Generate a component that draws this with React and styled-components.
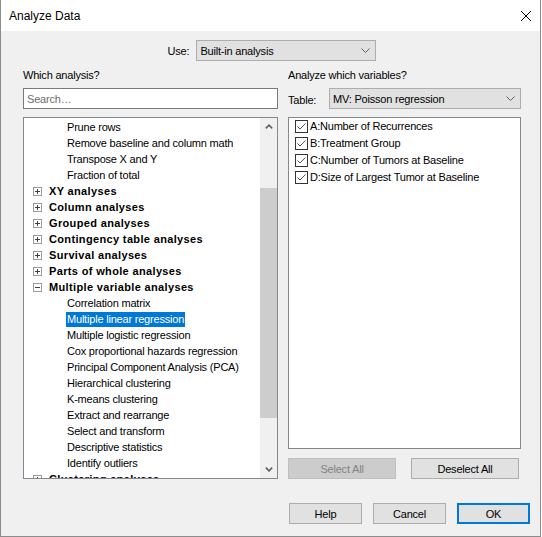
import React from 'react';
import styled, { createGlobalStyle } from 'styled-components';

const GlobalStyle = createGlobalStyle`
  html, body { margin: 0; padding: 0; background: #ffffff; }
  body {
    font-family: "Liberation Sans", Arial, sans-serif;
    font-size: 11px;
    letter-spacing: -0.2px;
    color: #000;
  }
  * { box-sizing: border-box; }
`;

const Window = styled.div`
  width: 541px;
  height: 537px;
  border: 1px solid #8c8c8c;
  border-top: none;
  background: #f0f0f0;
  display: flex;
  flex-direction: column;
`;

const TitleBar = styled.div`
  height: 31px;
  flex: none;
  background: #fff;
  display: flex;
  align-items: center;
  justify-content: space-between;
  padding: 0 9px 0 8px;
  font-size: 12px;
  letter-spacing: 0;
`;

const UseRow = styled.div`
  margin-top: 9px;
  height: 21px;
  display: flex;
  align-items: center;
  justify-content: center;
  gap: 7px;
  padding-left: 3px;
`;

const Columns = styled.div`
  display: flex;
  gap: 10px;
  padding-left: 22px;
  margin-top: 7px;
`;

const Column = styled.div`
  width: ${(p) => p.width}px;
  display: flex;
  flex-direction: column;
`;

const Label = styled.div`
  height: 14px;
  line-height: 14px;
`;

const Select = styled.div`
  height: 21px;
  width: ${(p) => (p.width ? `${p.width}px` : 'auto')};
  flex: ${(p) => (p.width ? 'none' : '1')};
  background: #e1e1e1;
  border: 1px solid #adadad;
  display: flex;
  align-items: center;
  justify-content: space-between;
  padding: 0 5px 0 3px;
`;

const SearchBox = styled.div`
  margin-top: 6px;
  height: 21px;
  border: 1px solid #7a7a7a;
  background: #fff;
  color: #6d6d6d;
  display: flex;
  align-items: center;
  padding-left: 3px;
`;

const TableRow = styled.div`
  margin-top: 6px;
  height: 21px;
  display: flex;
  align-items: center;
`;

const TableLabel = styled.div`
  width: 41px;
  padding-top: 3px;
`;

const ListBox = styled.div`
  margin-top: 8px;
  height: ${(p) => p.height}px;
  border: 1px solid #828790;
  background: #fff;
  display: flex;
  overflow: hidden;
`;

const TreeBody = styled.div`
  flex: 1;
  padding-top: 1px;
`;

const CategoryRow = styled.div`
  height: 16px;
  display: flex;
  align-items: center;
  padding-left: 9px;
  font-weight: bold;
  letter-spacing: 0.35px;
  white-space: nowrap;
  svg { margin-right: 7px; flex: none; }
`;

const ItemRow = styled.div`
  height: 16px;
  display: flex;
  align-items: flex-start;
  padding-left: 42px;
`;

const ItemText = styled.span`
  margin-top: 1px;
  height: 15px;
  line-height: 15px;
  padding: 0 1px;
  white-space: nowrap;
  background: ${(p) => (p.selected ? '#0078d7' : 'transparent')};
  color: ${(p) => (p.selected ? '#fff' : '#000')};
`;

const ScrollBar = styled.div`
  width: 17px;
  flex: none;
  background: #f0f0f0;
  display: flex;
  flex-direction: column;
`;

const ScrollArrow = styled.div`
  height: 17px;
  flex: none;
  display: flex;
  align-items: center;
  justify-content: center;
`;

const ScrollTrack = styled.div`
  flex: 1;
`;

const ScrollThumb = styled.div`
  margin-top: ${(p) => p.offset}px;
  height: ${(p) => p.size}px;
  background: #cdcdcd;
`;

const VarList = styled.div`
  flex: 1;
`;

const VarRow = styled.div`
  height: 17px;
  display: flex;
  align-items: flex-start;
  padding: 2px 0 0 6px;
  gap: 2px;
  line-height: 13px;
  svg { flex: none; }
`;

const ButtonRow = styled.div`
  margin-top: ${(p) => p.top}px;
  display: flex;
  justify-content: ${(p) => p.justify || 'flex-start'};
  gap: ${(p) => p.gap}px;
  padding-right: ${(p) => p.right || 0}px;
`;

const Button = styled.div`
  width: ${(p) => p.width}px;
  height: 21px;
  display: flex;
  align-items: center;
  justify-content: center;
  background: ${(p) => (p.disabled ? '#cccccc' : '#e1e1e1')};
  color: ${(p) => (p.disabled ? '#838383' : '#000')};
  border: ${(p) => (p.primary ? '2px solid #0078d7' : p.disabled ? '1px solid #bfbfbf' : '1px solid #adadad')};
`;

const Chevron = () => (
  <svg width="9" height="5" viewBox="0 0 9 5">
    <polyline points="0.5,0.5 4.5,4.5 8.5,0.5" fill="none" stroke="#606060" strokeWidth="1" />
  </svg>
);

const ArrowUp = () => (
  <svg width="8" height="5" viewBox="0 0 8 5">
    <polyline points="0.8,4.4 4,1.2 7.2,4.4" fill="none" stroke="#606060" strokeWidth="1.6" />
  </svg>
);

const ArrowDown = () => (
  <svg width="8" height="5" viewBox="0 0 8 5">
    <polyline points="0.8,0.6 4,3.8 7.2,0.6" fill="none" stroke="#606060" strokeWidth="1.6" />
  </svg>
);

const CloseIcon = () => (
  <svg width="10" height="10" viewBox="0 0 10 10">
    <path d="M0 0 L10 10 M10 0 L0 10" stroke="#000" strokeWidth="1" />
  </svg>
);

const Expander = ({ open }) => (
  <svg width="9" height="9" viewBox="0 0 9 9">
    <rect x="0.5" y="0.5" width="8" height="8" fill="#fff" stroke="#9b9b9b" />
    <line x1="2" y1="4.5" x2="7" y2="4.5" stroke="#404040" />
    {!open && <line x1="4.5" y1="2" x2="4.5" y2="7" stroke="#404040" />}
  </svg>
);

const CheckBox = () => (
  <svg width="13" height="13" viewBox="0 0 13 13">
    <rect x="0.5" y="0.5" width="12" height="12" fill="#fff" stroke="#333" />
    <polyline points="2.5,6.5 5,9 10.5,3.5" fill="none" stroke="#555" strokeWidth="1" />
  </svg>
);

const tree = [
  { label: 'Prune rows' },
  { label: 'Remove baseline and column math' },
  { label: 'Transpose X and Y' },
  { label: 'Fraction of total' },
  { label: 'XY analyses', group: true },
  { label: 'Column analyses', group: true },
  { label: 'Grouped analyses', group: true },
  { label: 'Contingency table analyses', group: true },
  { label: 'Survival analyses', group: true },
  { label: 'Parts of whole analyses', group: true },
  { label: 'Multiple variable analyses', group: true, open: true },
  { label: 'Correlation matrix' },
  { label: 'Multiple linear regression', selected: true },
  { label: 'Multiple logistic regression' },
  { label: 'Cox proportional hazards regression' },
  { label: 'Principal Component Analysis (PCA)' },
  { label: 'Hierarchical clustering' },
  { label: 'K-means clustering' },
  { label: 'Extract and rearrange' },
  { label: 'Select and transform' },
  { label: 'Descriptive statistics' },
  { label: 'Identify outliers' },
  { label: 'Clustering analyses', group: true },
];

const variables = [
  'A:Number of Recurrences',
  'B:Treatment Group',
  'C:Number of Tumors at Baseline',
  'D:Size of Largest Tumor at Baseline',
];

export default function App() {
  return (
    <>
      <GlobalStyle />
      <Window>
        <TitleBar>
          <span>Analyze Data</span>
          <CloseIcon />
        </TitleBar>

        <UseRow>
          <span>Use:</span>
          <Select width={180}>
            <span>Built-in analysis</span>
            <Chevron />
          </Select>
        </UseRow>

        <Columns>
          <Column width={255}>
            <Label>Which analysis?</Label>
            <SearchBox>Search…</SearchBox>
            <ListBox height={362}>
              <TreeBody>
                {tree.map((node) =>
                  node.group ? (
                    <CategoryRow key={node.label}>
                      <Expander open={node.open} />
                      {node.label}
                    </CategoryRow>
                  ) : (
                    <ItemRow key={node.label}>
                      <ItemText selected={node.selected}>{node.label}</ItemText>
                    </ItemRow>
                  )
                )}
              </TreeBody>
              <ScrollBar>
                <ScrollArrow><ArrowUp /></ScrollArrow>
                <ScrollTrack>
                  <ScrollThumb offset={53} size={230} />
                </ScrollTrack>
                <ScrollArrow><ArrowDown /></ScrollArrow>
              </ScrollBar>
            </ListBox>
          </Column>

          <Column width={233}>
            <Label>Analyze which variables?</Label>
            <TableRow>
              <TableLabel>Table:</TableLabel>
              <Select>
                <span>MV: Poisson regression</span>
                <Chevron />
              </Select>
            </TableRow>
            <ListBox height={332}>
              <VarList>
                {variables.map((v) => (
                  <VarRow key={v}>
                    <CheckBox />
                    <span>{v}</span>
                  </VarRow>
                ))}
              </VarList>
            </ListBox>
            <ButtonRow top={9} gap={15}>
              <Button width={108} disabled>Select All</Button>
              <Button width={108}>Deselect All</Button>
            </ButtonRow>
          </Column>
        </Columns>

        <ButtonRow top={24} gap={11} justify="flex-end" right={10}>
          <Button width={73}>Help</Button>
          <Button width={73}>Cancel</Button>
          <Button width={73} primary>OK</Button>
        </ButtonRow>
      </Window>
    </>
  );
}
